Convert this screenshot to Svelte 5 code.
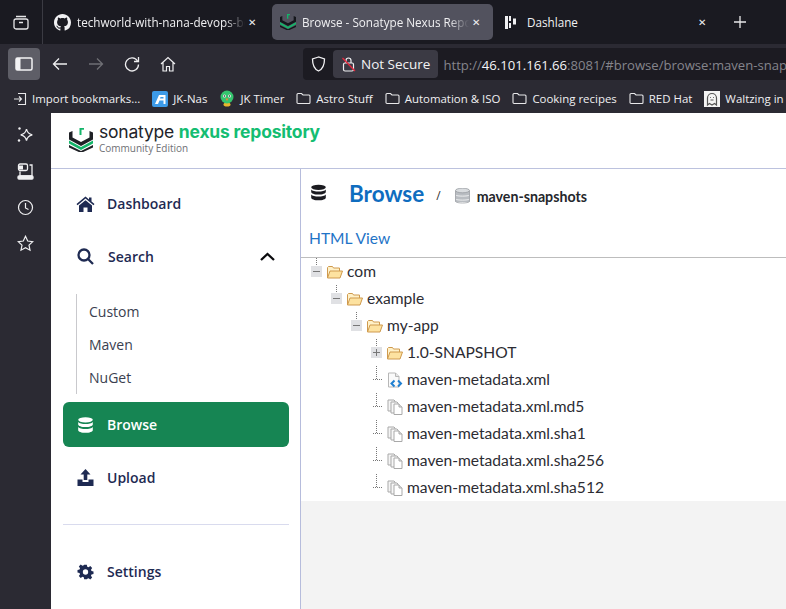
<script>
    const bookmarks = [
        { name: "Astro Stuff" },
        { name: "Automation & ISO" },
        { name: "Cooking recipes" },
        { name: "RED Hat" },
    ];

    const tree = [
        { name: "com", depth: 0, type: "open", toggle: "minus" },
        { name: "example", depth: 1, type: "open", toggle: "minus" },
        { name: "my-app", depth: 2, type: "open", toggle: "minus" },
        { name: "1.0-SNAPSHOT", depth: 3, type: "open", toggle: "plus" },
        { name: "maven-metadata.xml", depth: 3, type: "xml" },
        { name: "maven-metadata.xml.md5", depth: 3, type: "copy" },
        { name: "maven-metadata.xml.sha1", depth: 3, type: "copy" },
        { name: "maven-metadata.xml.sha256", depth: 3, type: "copy" },
        { name: "maven-metadata.xml.sha512", depth: 3, type: "copy" },
    ];
</script>

{#snippet sonatypeLogo(size, mark)}
    <svg width={size} height={size} viewBox="0 0 24 24">
        <path d="M0 4.500 3.500 3v6.500l8.500 4.500 8.500-4.500V3L24 4.500v7L12 18 0 11.500z" fill={mark} />
        <path d="M0 12.500 12 19l12-6.500v3L12 22 0 15.500z" fill="#14b56a" />
        <path d="M0 17 12 23l12-6v2.500L12 25 0 19.500z" fill={mark} />
        <path d="M10.500 0H15v1.800h-2.500V7h-2z" fill="#14b56a" />
    </svg>
{/snippet}

{#snippet folderOutline()}
    <svg class="bm-icon" width="15" height="15" viewBox="0 0 15 15" fill="none" stroke="#e8e8ea" stroke-width="1.1">
        <path d="M1 3.500a1 1 0 0 1 1-1h3.500l1.500 1.500h6a1 1 0 0 1 1 1v6.500a1 1 0 0 1-1 1H2a1 1 0 0 1-1-1z" />
    </svg>
{/snippet}

<div class="browser">
    <div class="tabbar">
        <div class="tab-side">
            <svg width="18" height="18" viewBox="0 0 18 18" fill="none" stroke="#e6e6e8" stroke-width="1.3">
                <rect x="2" y="6" width="14" height="10" rx="2" />
                <path d="M4 3.500h10M7 9.500h4" />
            </svg>
        </div>
        <div class="tab first">
            <svg class="tab-icon" width="17" height="17" viewBox="0 0 16 16" fill="#f1f1f3">
                <path d="M8 0C3.580 0 0 3.580 0 8c0 3.540 2.290 6.530 5.470 7.590.4.070.55-.17.55-.38 0-.19-.01-.82-.01-1.490-2.010.37-2.530-.49-2.690-.94-.09-.23-.48-.94-.82-1.130-.28-.15-.68-.52-.01-.53.630-.01 1.080.58 1.230.82.720 1.210 1.870.870 2.330.660.070-.520.280-.870.510-1.070-1.780-.2-3.640-.890-3.640-3.950 0-.870.310-1.590.820-2.150-.080-.2-.360-1.020.080-2.120 0 0 .670-.210 2.200.820.640-.180 1.320-.270 2-.270s1.360.090 2 .270c1.530-1.040 2.200-.820 2.200-.820.440 1.100.160 1.920.080 2.120.510.560.820 1.270.820 2.150 0 3.070-1.870 3.750-3.650 3.950.290.250.540.730.540 1.480 0 1.070-.010 1.930-.010 2.200 0 .210.150.460.550.380A8.010 8.010 0 0 0 16 8c0-4.420-3.580-8-8-8z" />
            </svg>
            <span class="tab-title fade">techworld-with-nana-devops-bo</span>
            <span class="tab-close">✕</span>
        </div>
        <div class="tab active">
            <span class="tab-icon">{@render sonatypeLogo(16, "#15171c")}</span>
            <span class="tab-title fade">Browse - Sonatype Nexus Repos</span>
            <span class="tab-close">✕</span>
        </div>
        <div class="tab last">
            <svg class="tab-icon" width="13" height="15" viewBox="0 0 13 15" fill="#f1f1f3">
                <path d="M1 1h3v13H1zM5 1h2v5H5zM5 8h2v5H5zM9 3.500h3v6H9z" />
            </svg>
            <span class="tab-title dash">Dashlane</span>
            <span class="tab-close">✕</span>
        </div>
        <svg class="new-tab" width="14" height="14" viewBox="0 0 14 14" stroke="#e8e8ea" stroke-width="1.3">
            <path d="M7 1v12M1 7h12" />
        </svg>
    </div>

    <div class="toolbar">
        <div class="sidebar-btn">
            <svg width="18" height="14" viewBox="0 0 18 14">
                <rect x="1" y="1" width="16" height="12" rx="1.500" fill="none" stroke="#f3f3f5" stroke-width="1.500" />
                <rect x="1" y="1" width="4.500" height="12" fill="#f3f3f5" />
            </svg>
        </div>
        <svg class="nav" width="16" height="14" viewBox="0 0 16 14" fill="none" stroke="#eeeef0" stroke-width="1.300">
            <path d="M15 7H1.500M7 1.500 1.500 7 7 12.500" />
        </svg>
        <svg class="nav" width="16" height="14" viewBox="0 0 16 14" fill="none" stroke="#6f6f75" stroke-width="1.300">
            <path d="M1 7h13.500M9 1.500 14.500 7 9 12.500" />
        </svg>
        <svg class="nav" width="16" height="16" viewBox="0 0 16 16" fill="none" stroke="#eeeef0" stroke-width="1.300">
            <path d="M13.500 5A6.500 6.500 0 1 0 14.500 8.500" />
            <path d="M14.500 1v4.500H10" />
        </svg>
        <svg class="nav" width="16" height="16" viewBox="0 0 16 16" fill="none" stroke="#eeeef0" stroke-width="1.200">
            <path d="M1 8 8 1.500 15 8M3 6.500V15h3.500v-4.500h3V15H13V6.500" />
        </svg>
        <div class="urlbar">
            <svg class="shield" width="15" height="16" viewBox="0 0 15 16" fill="none" stroke="#f0f0f2" stroke-width="1.300">
                <path d="M7.500 1 1.500 3c0 6 1.500 10 6 12 4.500-2 6-6 6-12z" />
            </svg>
            <div class="secure">
                <svg width="14" height="16" viewBox="0 0 14 16" fill="none">
                    <rect x="1.500" y="7" width="10" height="8" rx="1.500" stroke="#f0f0f2" stroke-width="1.200" />
                    <path d="M4 7V4.500a2.500 2.500 0 0 1 5 0V7" stroke="#f0f0f2" stroke-width="1.200" />
                    <path d="M0.500 2 13 15" stroke="#e5263c" stroke-width="1.300" />
                </svg>
                <span>Not Secure</span>
            </div>
            <span class="url"><span class="dim">http://</span>46.101.161.66<span class="dim">:8081/#browse/browse:maven-snaps</span></span>
        </div>
    </div>

    <div class="bookmarks">
        <div class="bm">
            <svg class="bm-icon" width="14" height="14" viewBox="0 0 14 14" fill="none" stroke="#e8e8ea" stroke-width="1.100">
                <path d="M5 1.500h7.500v11H5M1 7h7M6 4.500 8.500 7 6 9.500" />
            </svg>
            <span>Import bookmarks...</span>
        </div>
        <div class="bm">
            <svg class="bm-icon" width="16" height="16" viewBox="0 0 16 16">
                <rect width="16" height="16" rx="2" fill="#3d9be9" />
                <path d="M3 13 7 4h6.500v9h-2V9.500H7.500L6 13zM8.500 6 8 7.500h3.500V6z" fill="#fff" />
            </svg>
            <span>JK-Nas</span>
        </div>
        <div class="bm">
            <svg class="bm-icon" width="16" height="17" viewBox="0 0 16 17">
                <ellipse cx="8" cy="14.500" rx="3.500" ry="2" fill="#e9b52e" />
                <circle cx="8" cy="7" r="6.500" fill="#35c46e" />
                <circle cx="5.500" cy="6" r="1.500" fill="#fff" />
                <circle cx="10.500" cy="6" r="1.500" fill="#fff" />
                <circle cx="5.500" cy="6" r="0.800" fill="#222" />
                <circle cx="10.500" cy="6" r="0.800" fill="#222" />
                <path d="M6.500 8.500h3L8 11z" fill="#f0883a" />
            </svg>
            <span>JK Timer</span>
        </div>
        {#each bookmarks as b}
            <div class="bm">
                {@render folderOutline()}
                <span>{b.name}</span>
            </div>
        {/each}
        <div class="bm">
            <svg class="bm-icon" width="16" height="16" viewBox="0 0 16 16">
                <rect width="16" height="16" fill="#f4f4f4" />
                <path d="M3.500 14V7a4.500 4.500 0 0 1 9 0v7l-2-1.500L8 14l-2.500-1.500z" fill="none" stroke="#555" stroke-width="1.200" />
                <path d="M6 6.500h.8M9.200 6.500h.8M6.500 9h3" stroke="#555" stroke-width="1" />
            </svg>
            <span>Waltzing in</span>
        </div>
    </div>

    <div class="body">
        <div class="rail">
            <svg width="18" height="18" viewBox="0 0 18 18" fill="none" stroke="#f0f0f2" stroke-width="1.300">
                <path d="M10.500 3c.7 3.700 2 5 5.800 5.800-3.800.8-5.100 2.100-5.800 5.800-.7-3.700-2-5-5.800-5.800 3.800-.8 5.100-2.100 5.800-5.800z" />
                <circle cx="3.500" cy="2.500" r="1.200" fill="#f0f0f2" stroke="none" />
                <circle cx="3" cy="14.500" r="1.200" fill="#f0f0f2" stroke="none" />
            </svg>
            <svg width="17" height="17" viewBox="0 0 17 17" fill="none" stroke="#f0f0f2" stroke-width="1.300">
                <rect x="1.500" y="1" width="9" height="6.500" rx="1.500" />
                <path d="M2 2.500h4v4H2z" fill="#f0f0f2" stroke="none" />
                <path d="M12.500 2h2.500v11M3 8.500V13h12" />
                <rect x="1" y="13" width="15" height="3" rx="1" fill="#f0f0f2" />
            </svg>
            <svg width="17" height="17" viewBox="0 0 17 17" fill="none" stroke="#f0f0f2" stroke-width="1.200">
                <circle cx="8.500" cy="8.500" r="7" />
                <path d="M8.500 4v5l3 1.500" />
            </svg>
            <svg width="17" height="17" viewBox="0 0 17 17" fill="none" stroke="#f0f0f2" stroke-width="1.200">
                <path d="m8.500 1.300 2.200 4.700 5 .6-3.700 3.500 1 5.100-4.500-2.500-4.500 2.500 1-5.100L1.300 6.600l5-.6z" />
            </svg>
        </div>

        <div class="page">
            <header class="header">
                <span class="logo">{@render sonatypeLogo(24, "#1f2126")}</span>
                <div>
                    <div class="brand">sonatype <b>nexus repository</b></div>
                    <div class="edition">Community Edition</div>
                </div>
            </header>

            <div class="main">
                <nav class="nav-col">
                    <div class="nav-item">
                        <svg width="19" height="16" viewBox="0 0 19 16" fill="#1e2a52">
                            <path d="M9.500 0.500 0.500 8l1 1.200 8-6.600 8 6.600 1-1.200-3-2.500V1.500h-2.500v2zM3 9.500V16h4.500v-4.500h4V16H16V9.500L9.500 4.200z" />
                        </svg>
                        <span>Dashboard</span>
                    </div>
                    <div class="nav-item search">
                        <svg width="17" height="17" viewBox="0 0 17 17" fill="none" stroke="#1e2a52" stroke-width="2.300">
                            <circle cx="7" cy="7" r="5.500" />
                            <path d="m11 11 5 5" />
                        </svg>
                        <span>Search</span>
                        <svg class="chevron" width="15" height="9" viewBox="0 0 15 9" fill="none" stroke="#0b0b0e" stroke-width="2.300">
                            <path d="m1 8 6.500-6L14 8" />
                        </svg>
                    </div>
                    <div class="subnav">
                        <div>Custom</div>
                        <div>Maven</div>
                        <div>NuGet</div>
                    </div>
                    <div class="nav-item selected">
                        <svg width="15" height="16" viewBox="0 0 15 16" fill="#fff">
                            <ellipse cx="7.500" cy="2.800" rx="7.300" ry="2.600" />
                            <path d="M0.200 5v2.500c0 1.500 3.300 2.600 7.300 2.600s7.300-1.100 7.300-2.600V5c-1 1.400-4 2-7.300 2S1.200 6.400.2 5zM.2 10v3.200c0 1.500 3.300 2.600 7.300 2.600s7.300-1.100 7.300-2.600V10c-1 1.400-4 2-7.300 2s-6.300-.6-7.300-2z" />
                        </svg>
                        <span>Browse</span>
                    </div>
                    <div class="nav-item">
                        <svg width="16" height="17" viewBox="0 0 16 17" fill="#1e2a52">
                            <path d="M8 0 3 5.500h3.200V11h3.600V5.500H13zM0 10.500h5V13h6v-2.500h5V17H0z" />
                        </svg>
                        <span>Upload</span>
                    </div>
                    <hr />
                    <div class="nav-item settings">
                        <svg width="15" height="16" viewBox="0 0 24 24" fill="#1e2a52">
                            <path fill-rule="evenodd" d="M10 1h4l.6 3.100 2 .8 2.600-1.800 2.800 2.800-1.800 2.600.8 2 3 .6v4l-3 .6-.8 2 1.800 2.600-2.800 2.800-2.600-1.800-2 .8L14 23h-4l-.6-3.100-2-.8-2.600 1.800L2 18.100l1.800-2.600-.8-2-3-.6v-4l3-.6.8-2L2 3.700l2.800-2.800 2.600 1.800 2-.8zM12 8a4 4 0 1 0 0 8 4 4 0 0 0 0-8z" />
                        </svg>
                        <span>Settings</span>
                    </div>
                </nav>

                <section class="content">
                    <div class="crumbs">
                        <svg class="db" width="15" height="17" viewBox="0 0 15 16" fill="#1b1b20">
                            <ellipse cx="7.500" cy="2.800" rx="7.300" ry="2.600" />
                            <path d="M0.200 5v2.500c0 1.500 3.300 2.600 7.300 2.600s7.300-1.100 7.300-2.600V5c-1 1.400-4 2-7.300 2S1.200 6.400.2 5zM.2 10v3.200c0 1.500 3.300 2.600 7.300 2.600s7.300-1.100 7.300-2.600V10c-1 1.400-4 2-7.300 2s-6.300-.6-7.300-2z" />
                        </svg>
                        <h1>Browse</h1>
                        <span class="sep">/</span>
                        <svg class="repo" width="15" height="16" viewBox="0 0 15 16">
                            <rect x="0.500" y="2" width="14" height="12" fill="#b9bdc2" />
                            <ellipse cx="7.500" cy="2.500" rx="7" ry="2.300" fill="#d9dcdf" stroke="#8f9499" stroke-width="0.700" />
                            <path d="M.5 7c1 1.500 13 1.500 14 0M.5 11c1 1.500 13 1.500 14 0" fill="none" stroke="#f2f3f4" stroke-width="0.900" />
                            <path d="M.5 3v10.500c1 2 13 2 14 0V3" fill="none" stroke="#8f9499" stroke-width="0.700" />
                        </svg>
                        <span class="repo-name">maven-snapshots</span>
                    </div>
                    <div class="html-view">HTML View</div>

                    <div class="tree">
                        {#each tree as node}
                            <div class="row" style="padding-left: {node.depth * 20 + 10}px">
                                <span class="guide"></span>
                                {#if node.toggle}
                                    <span class="toggle" class:plus={node.toggle === "plus"}></span>
                                {:else}
                                    <span class="no-toggle"></span>
                                {/if}
                                {#if node.type === "open"}
                                    <svg class="node-icon" width="16" height="14" viewBox="0 0 16 14">
                                        <path d="M.5 13V2.500l1-1h4l1 1.500h6v3" fill="#fff1c8" stroke="#cf9a4e" />
                                        <path d="M.5 13 3 6h12.500L13 13z" fill="#fde2a0" stroke="#cf9a4e" />
                                    </svg>
                                {:else if node.type === "xml"}
                                    <svg class="node-icon" width="16" height="16" viewBox="0 0 16 16">
                                        <path d="M1.500 1h7l3.500 3.500V15h-10.500z" fill="#fafafa" stroke="#b7b7b7" />
                                        <path d="M8.500 1v3.500H12" fill="#e5e5e5" stroke="#b7b7b7" />
                                        <path d="M7.500 8.500 4.500 11.500l3 3M11 8.500l3 3-3 3" fill="none" stroke="#1f7fd1" stroke-width="2" />
                                    </svg>
                                {:else}
                                    <svg class="node-icon" width="16" height="16" viewBox="0 0 16 16">
                                        <path d="M1 1h6l1 1v10H1z" fill="#f4f4f4" stroke="#a9a9a9" />
                                        <path d="M4 3h6l1 1v10H4z" fill="#f7f7f7" stroke="#a9a9a9" />
                                        <path d="M7 5h5l3 3v7.500H7z" fill="#fff" stroke="#a9a9a9" />
                                        <path d="M12 5v3h3" fill="#ddd" stroke="#a9a9a9" />
                                    </svg>
                                {/if}
                                <span class="label">{node.name}</span>
                            </div>
                        {/each}
                    </div>
                    <div class="empty"></div>
                </section>
            </div>
        </div>
    </div>
</div>

<style>
    :global(body) {
        margin: 0;
        overflow: hidden;
    }

    .browser {
        width: 786px;
        height: 609px;
        display: flex;
        flex-direction: column;
        overflow: hidden;
        background: #fff;
        font-family: "Open Sans", "Noto Sans", sans-serif;
    }

    .tabbar {
        height: 44px;
        flex: none;
        display: flex;
        align-items: center;
        background: #1a1a21;
        color: #f0f0f2;
    }

    .tab-side {
        width: 43px;
        height: 44px;
        flex: none;
        display: flex;
        align-items: center;
        justify-content: center;
        box-sizing: border-box;
        border-right: 1px solid #3b3b43;
    }

    .tab {
        width: 229px;
        height: 36px;
        padding: 0 10px 0 11px;
        flex: none;
        display: flex;
        align-items: center;
        box-sizing: border-box;
        border-radius: 5px;
        font-size: 11.700px;
    }

    .tab.first {
        padding-right: 12px;
    }

    .tab.last {
        padding-right: 12px;
    }

    .tab.active {
        width: 221px;
        background: #52525e;
        padding: 0 9px 0 8px;
    }

    .tab-icon {
        flex: none;
        margin-right: 6px;
        display: flex;
    }

    .tab-title {
        flex: 1;
        min-width: 0;
        white-space: nowrap;
        overflow: hidden;
    }

    .fade {
        mask-image: linear-gradient(to right, #000 88%, transparent);
    }

    .dash {
        margin-left: 4px;
    }

    .tab-close {
        flex: none;
        margin-left: 3px;
        font-size: 10px;
        width: 12px;
    }

    .new-tab {
        margin-left: 11px;
    }

    .toolbar {
        height: 40px;
        flex: none;
        display: flex;
        align-items: center;
        background: #2b2a33;
        padding-left: 8px;
        box-sizing: border-box;
    }

    .sidebar-btn {
        width: 32px;
        height: 32px;
        flex: none;
        display: flex;
        align-items: center;
        justify-content: center;
        background: #5e5e67;
        border-radius: 4px;
        margin-right: 12px;
    }

    .nav {
        flex: none;
        margin-right: 20px;
    }

    .urlbar {
        width: 483px;
        height: 32px;
        flex: none;
        margin-left: auto;
        display: flex;
        align-items: center;
        background: #1c1b22;
        border-radius: 4px 0 0 4px;
        overflow: hidden;
    }

    .shield {
        flex: none;
        margin: 0 7px 0 8px;
    }

    .secure {
        height: 28px;
        flex: none;
        display: flex;
        align-items: center;
        gap: 5px;
        padding: 0 8px 0 9px;
        box-sizing: border-box;
        background: #3b3a44;
        border-radius: 4px;
        color: #f2f2f4;
        font-size: 13.500px;
    }

    .url {
        margin-left: 5px;
        padding-top: 1px;
        white-space: nowrap;
        color: #f5f5f7;
        font-size: 13.100px;
    }

    .dim {
        color: #85858c;
    }

    .bookmarks {
        height: 29px;
        flex: none;
        display: flex;
        align-items: center;
        gap: 12px;
        padding-left: 13px;
        background: #2b2a33;
        color: #f0f0f2;
        font-size: 11.450px;
        white-space: nowrap;
        overflow: hidden;
    }

    .bm {
        display: flex;
        align-items: center;
        gap: 5px;
    }

    .bm-icon {
        flex: none;
    }

    .body {
        flex: 1;
        min-height: 0;
        display: flex;
    }

    .rail {
        width: 51px;
        flex: none;
        display: flex;
        flex-direction: column;
        align-items: center;
        gap: 19px;
        padding: 13px 0 0;
        box-sizing: border-box;
        background: #2b2a33;
    }

    .rail svg {
        margin-left: -1px;
    }

    .page {
        flex: 1;
        min-width: 0;
        display: flex;
        flex-direction: column;
    }

    .header {
        height: 56px;
        flex: none;
        display: flex;
        align-items: center;
        padding: 0 0 3px 18px;
        box-sizing: border-box;
        border-bottom: 1px solid #bcc2de;
    }

    .logo {
        display: flex;
        margin-top: 2px;
        margin-right: 6px;
    }

    .brand {
        font-family: "Inter", sans-serif;
        font-size: 17.500px;
        line-height: 17px;
        color: #22242a;
        letter-spacing: -0.2px;
        white-space: nowrap;
    }

    .brand b {
        font-weight: 700;
        color: #14bd72;
    }

    .edition {
        margin-top: 2px;
        font-size: 10px;
        line-height: 13px;
        color: #6f7175;
    }

    .main {
        flex: 1;
        min-height: 0;
        display: flex;
    }

    .nav-col {
        width: 250px;
        flex: none;
        box-sizing: border-box;
        padding: 8px 11px 0 12px;
        border-right: 1px solid #b6bcdc;
    }

    .nav-item {
        height: 53px;
        display: flex;
        align-items: center;
        gap: 12px;
        padding-left: 13px;
        font-size: 14px;
        font-weight: 600;
        color: #1e2a52;
    }

    .nav-item svg {
        flex: none;
    }

    .nav-item svg:first-child {
        width: 19px;
    }

    .search {
        gap: 13px;
    }

    .chevron {
        margin-left: auto;
        margin-right: 14px;
    }

    .subnav {
        height: 100px;
        margin: 11px 0 0 13px;
        padding: 1px 0 0 12px;
        box-sizing: border-box;
        border-left: 1px solid #c9c9cd;
        color: #3b3f50;
        font-size: 14px;
    }

    .subnav div {
        height: 33px;
        line-height: 33px;
    }

    .nav-item.selected {
        height: 45px;
        margin-top: 8px;
        background: #168553;
        border-radius: 6px;
        color: #fff;
    }

    .nav-item.selected + .nav-item {
        margin-top: 4px;
    }

    hr {
        height: 1px;
        margin: 20px 0 0;
        border: 0;
        background: #d9dbee;
    }

    .settings {
        margin-top: 20px;
    }

    .content {
        flex: 1;
        min-width: 0;
        display: flex;
        flex-direction: column;
    }

    .crumbs {
        height: 51px;
        flex: none;
        display: flex;
        align-items: center;
        padding-left: 10px;
    }

    .db {
        flex: none;
        margin-top: -5px;
        margin-right: 23px;
    }

    h1 {
        margin: -2px 0 0;
        font-family: "Lato", sans-serif;
        font-size: 22.500px;
        font-weight: 700;
        color: #0f6dbf;
    }

    .sep {
        margin: 2px 14px 0 12px;
        font-size: 12px;
        color: #333;
    }

    .repo {
        flex: none;
        margin-top: 2px;
        margin-right: 7px;
    }

    .repo-name {
        margin-top: 3px;
        font-family: "Lato", sans-serif;
        font-size: 14.200px;
        font-weight: 700;
        color: #25272c;
    }

    .html-view {
        height: 38px;
        flex: none;
        line-height: 37px;
        padding-left: 8px;
        box-sizing: border-box;
        border-bottom: 1px solid #bdbdbd;
        font-family: "Lato", sans-serif;
        font-size: 15.600px;
        color: #1f74c7;
    }

    .tree {
        flex: none;
        background: #fff;
    }

    .row {
        position: relative;
        height: 27px;
        display: flex;
        align-items: center;
    }

    .toggle, .no-toggle {
        position: relative;
        width: 11px;
        height: 11px;
        flex: none;
        margin-right: 5px;
    }

    .toggle {
        background: #e0e1e4;
    }

    .toggle::before {
        content: "";
        position: absolute;
        left: 2px;
        right: 2px;
        top: 5px;
        height: 1px;
        background: #777;
    }

    .toggle.plus::after {
        content: "";
        position: absolute;
        top: 2px;
        bottom: 2px;
        left: 5px;
        width: 1px;
        background: #777;
    }

    .no-toggle {
        border-top: 1px dotted #777;
        height: 0;
        width: 9px;
        margin-left: 2px;
    }

    .guide {
        position: absolute;
        height: 13px;
        top: 0;
        width: 0;
        margin-left: 5px;
        border-left: 1px dotted #777;
    }

    .node-icon {
        flex: none;
        margin-right: 4px;
    }

    .label {
        padding-bottom: 2px;
        font-family: "Lato", sans-serif;
        font-size: 15.600px;
        color: #2c2c33;
        white-space: nowrap;
    }

    .empty {
        flex: 1;
        background: #f3f3f3;
    }
</style>
